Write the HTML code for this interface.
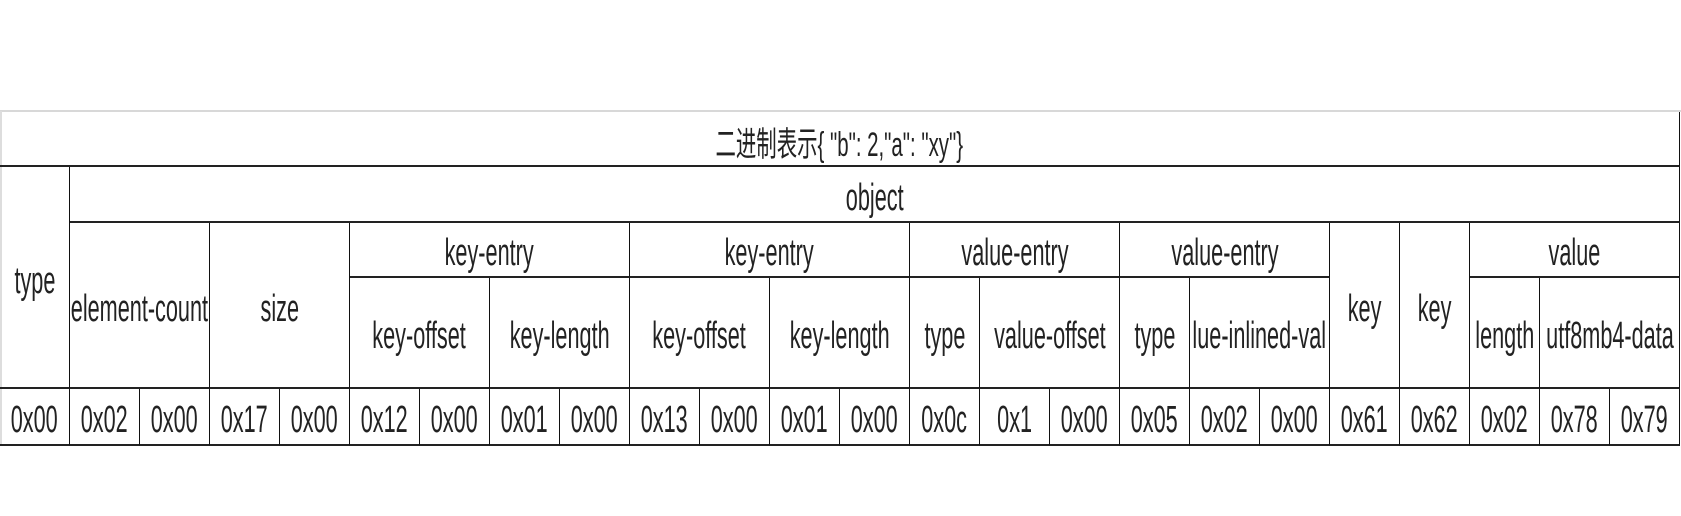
<!DOCTYPE html>
<html><head><meta charset="utf-8"><style>
body{margin:0;width:1681px;height:516px;background:#fff;position:relative;overflow:hidden;font-family:"Liberation Sans","Noto Sans CJK SC",sans-serif;}
.c{position:absolute;box-sizing:border-box;border-right:1.5px solid #111;border-bottom:2.5px solid #222;display:flex;align-items:center;justify-content:center;overflow:hidden;white-space:nowrap;}
.c span{display:inline-block;font-size:38px;color:#222;transform:scaleX(0.57);padding-top:8px}
#top{position:absolute;left:0;top:110px;width:1681px;height:2px;background:#d8d8d8}
#lft{position:absolute;left:0;top:111px;width:2px;height:334px;background:#ddd}
</style></head><body>
<div id="top"></div><div id="lft"></div>
<script>
const R=[112,167,223,278,389,446];
const cells=[
[0,24,0,1,'二进制表示{ "b": 2,"a": "xy"}'],
[0,1,1,4,'type'],[1,24,1,2,'object'],
[1,3,2,4,'element-count'],[3,5,2,4,'size'],
[5,9,2,3,'key-entry'],[5,7,3,4,'key-offset'],[7,9,3,4,'key-length'],
[9,13,2,3,'key-entry'],[9,11,3,4,'key-offset'],[11,13,3,4,'key-length'],
[13,16,2,3,'value-entry'],[13,14,3,4,'type'],[14,16,3,4,'value-offset'],
[16,19,2,3,'value-entry'],[16,17,3,4,'type'],[17,19,3,4,'lue-inlined-val'],
[19,20,2,4,'key'],[20,21,2,4,'key'],
[21,24,2,3,'value'],[21,22,3,4,'length'],[22,24,3,4,'utf8mb4-data']];
const d=['0x00','0x02','0x00','0x17','0x00','0x12','0x00','0x01','0x00','0x13','0x00','0x01','0x00','0x0c','0x1','0x00','0x05','0x02','0x00','0x61','0x62','0x02','0x78','0x79'];
d.forEach((v,i)=>cells.push([i,i+1,4,5,v]));
let h='';
for(const [a,b,r1,r2,t] of cells){
 const sty=r1==0?'font-size:34px;transform:scaleX(0.6);padding-top:6px':'';
 h+=`<div class="c" style="left:${a*70}px;width:${(b-a)*70}px;top:${R[r1]}px;height:${R[r2]-R[r1]}px"><span style="${sty}">${t.replace(/</g,'&lt;')}</span></div>`;
}
document.body.insertAdjacentHTML('beforeend',h);
</script>
</body></html>
